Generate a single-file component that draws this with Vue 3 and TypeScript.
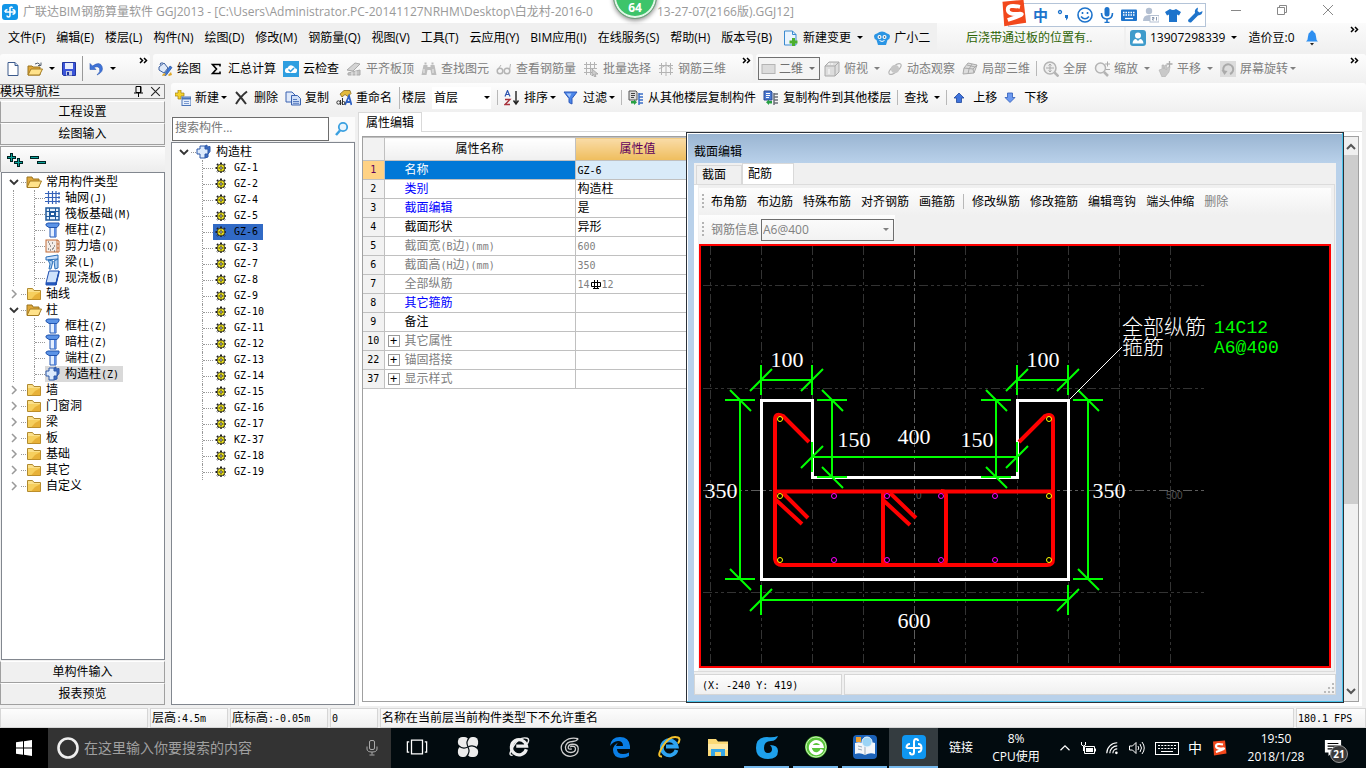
<script setup lang="ts">
import { ref } from 'vue'

interface Tool {
  icon?: string
  label?: string
  arrow?: 'near' | 'far'
  sep?: boolean
  dim?: boolean
}
interface TreeNode {
  label: string
  icon: string
  open?: boolean
  children?: { label: string; icon: string }[]
}
interface PropertyRow {
  no: number
  name: string
  value?: string
  tone: 'plain' | 'link' | 'dim'
  group?: boolean
}
interface Dim {
  x1: number
  y1: number
  x2: number
  y2: number
  text: string
  tx: number
  ty: number
}

const icons: Record<string, string> = {
  logo: '<rect width="16" height="16" rx="3" fill="#1296e8"/><path d="M8 3v8.500Q8 13 6.500 13T5 11.500M3 8h10M10.500 5.500Q13 6 13 8T10.500 10.300M5.500 5.500Q3 6 3 8M8 4q1.500-2 2.500 0" fill="none" stroke="#fff" stroke-width="1.500"/>',
  page: '<path d="M3 1.500h7l3 3v10H3z" fill="#fff" stroke="#3c5a8c"/><path d="M10 1.500v3h3" fill="#cfe0f5" stroke="#3c5a8c"/>',
  folderOpen: '<path d="M1 3h5l1 2h6v8H1z" fill="#e0a83a" stroke="#9a7420"/><path d="M4 7h11.500l-3 6.500H1z" fill="#ffe28a" stroke="#a57c22"/>',
  openFile: '<path d="M1 5h4l1 1h7v8H1z" fill="#e0a83a" stroke="#9a7420"/><path d="M4 8h11.500l-3 6H1z" fill="#ffe28a" stroke="#a57c22"/><path d="M8 3q3-2.500 5.500 1M14 1.500v3h-3" fill="none" stroke="#55606e"/>',
  folder: '<path d="M1.500 2.500h5l1.500 2h6.500v9h-13z" fill="#fbe08a" stroke="#b08a30"/><path d="M2 6h12v7H2z" fill="#f6cf5e"/><path d="M9 9l5.500-3v7.500H5z" fill="#dd9c20" opacity=".6"/>',
  save: '<path d="M1.500 1.500h13v13h-12l-1-1z" fill="#3b55d9" stroke="#2136a0"/><path d="M4 2h8v6H4z" fill="#e9eefc"/><path d="M5 10h6v4.500H5z" fill="#c7cfe6"/><path d="M6 11h2v3H6z" fill="#2136a0"/>',
  undo: '<path d="M2 2.500v6h6L6 6.500q4-2 5.500 1T9 14q7-3 5-8.500T4.500 5z" fill="#3f73d8" stroke="#2b59b4" stroke-width=".6"/>',
  paint: '<path d="M2 6l5-4 4 5-4 5-5-3z" fill="#dfe9f8" stroke="#3b5fa0"/><path d="M3 4q0-3 3-2" fill="none" stroke="#3b5fa0"/><path d="M7 14l6-9 2 1.500-6 8z" fill="#3f79d8" stroke="#234f9c" stroke-width=".7"/><path d="M5 15q1-4 4-2-1 2-4 2M11 14l3-3 1 3-3 1z" fill="#e0a82a"/>',
  sigma: '<path d="M12 5.500V3.500H4.500L8.500 8l-4 4.500H12v-2" fill="none" stroke="#000" stroke-width="1.600"/>',
  cloud: '<rect width="16" height="16" fill="#2e9ee0"/><path d="M4 12q-2.500-.5-2-3T4.500 7Q6 3.500 9 4.500T11.800 7.300Q14.500 7.500 14 10T12 12z" fill="#fff"/><path d="M5.500 8.500l2 2 3.500-3.500" fill="none" stroke="#2e9ee0" stroke-width="1.500"/>',
  align: '<path d="M1 9l8-7 5 1-7 7z" fill="#d4d4d4" stroke="#aaa"/><path d="M2 12l12-3v5H2z" fill="#c4c4c4" stroke="#aaa"/><path d="M6 11v4M10 10v5" stroke="#eee"/>',
  binoc: '<path d="M2.500 4h4v2h3V4h4l2 10h-5l-1-5h-3l-1 5h-5z" fill="#bdbdbd"/><path d="M3.500 1.500h2v2h-2zM10.500 1.500h2v2h-2z" fill="#bdbdbd"/><path d="M3 8v4M12 8v4" stroke="#eee"/>',
  glasses: '<circle cx="4" cy="10" r="2.800" fill="none" stroke="#b4b4b4" stroke-width="1.500"/><circle cx="11" cy="10" r="2.800" fill="none" stroke="#b4b4b4" stroke-width="1.500"/><path d="M1.500 9L5 4M13.500 9l1-6" stroke="#b4b4b4" fill="none"/>',
  gridPick: '<path d="M1 3.500h13M1 7.500h13M1 11.500h8M3.500 1v13M7.500 1v13M11.500 1v7" stroke="#b4b4b4" fill="none"/><path d="M9 8l6 5-3 .2 1 2.300-1.500.5-1-2.500L9 15z" fill="#ccc" stroke="#999" stroke-width=".7"/>',
  rebar3d: '<path d="M1 4.500h14M1 11.500h14M3.500 2v12M8 1v14M12.500 2v12M1 8l7-4 7 4" stroke="#b4b4b4" fill="none"/>',
  rectDim: '<rect x="1" y="3.500" width="13" height="9" fill="#dcdcdc" stroke="#b4b4b4"/>',
  cube: '<path d="M1 5l4-4h10v10l-4 4H1z" fill="#ddd" stroke="#aaa"/><path d="M1 5h10v10M11 5l4-4" stroke="#aaa" fill="none"/><path d="M5 2v2M8 2v2M5 8v5" stroke="#fff"/>',
  orbit: '<ellipse cx="8" cy="8" rx="7.500" ry="3" transform="rotate(-40 8 8)" fill="none" stroke="#b4b4b4"/><circle cx="8" cy="8" r="4" fill="#c6c6c6"/>',
  local3d: '<path d="M6 2l9 2-3 8-11 1 1-6z" fill="#ddd" stroke="#aaa"/><path d="M2 7l9 1 4-4M11 8l1 4M5 4l8 2M6 13l1-5 3-5" stroke="#aaa" fill="none"/>',
  full: '<circle cx="7" cy="7" r="6" fill="#eee" stroke="#b4b4b4" stroke-width="1.500"/><path d="M7 3v8M3 7h8M5.500 4.500L7 3l1.500 1.500M5.500 9.500L7 11l1.500-1.500" stroke="#aaa" fill="none"/><path d="M11.500 11.500l4 4" stroke="#b4b4b4" stroke-width="2.500"/>',
  zoom: '<circle cx="6.500" cy="7" r="5" fill="#f2f2f2" stroke="#b4b4b4" stroke-width="1.500"/><path d="M10 11l4 4" stroke="#b4b4b4" stroke-width="2.500"/><path d="M11 3h5M13.500 .5v5M12 8.500h4" stroke="#aaa"/>',
  pan: '<path d="M2 9l3-1V4h2v4l1-4h2l-1 5 2-3h2l-1 5-4 5H5z" fill="#c9c9c9" stroke="#b0b0b0" stroke-width=".6"/><path d="M12.500 0v6M9.500 3h6" stroke="#aaa" stroke-width="1.300"/>',
  rotate: '<rect x="0" y="0" width="16" height="16" fill="#dcdcdc"/><path d="M4 11a5 5 0 1 1 6 2" fill="none" stroke="#aaa" stroke-width="2"/><path d="M1.500 9l3 5 3-4z" fill="#aaa"/>',
  create: '<path d="M3 0h3v3h3v3H6v3H3V6H0V3h3z" fill="#f4d22c" stroke="#a07f10" stroke-width=".7"/><rect x="7" y="7" width="9" height="8.500" fill="#e6effc" stroke="#4a74b8"/><path d="M7 8.500h9" stroke="#4a74b8" stroke-width="2"/><path d="M9 11.500h5M9 13.500h5" stroke="#7b9ad0"/>',
  cross: '<path d="M2 2q5 5 10 12M13 1.500Q7 6 2 14" fill="none" stroke="#333" stroke-width="2"/>',
  copy: '<path d="M1 2h6l3 3v7H1z" fill="#dfe9fa" stroke="#3a62b0"/><path d="M6.500 5.500h6l3 3v6.500h-9z" fill="#cfdff8" stroke="#3a62b0"/><path d="M8 9.500h4M8 11.500h6M8 13.300h6" stroke="#3a62b0" stroke-width=".8"/>',
  rename: '<path d="M4 4l4-3.500h6l1 3-3 3-3-2-3 2.500z" fill="#e3bb3c" stroke="#7a5c10" stroke-width=".7"/><path d="M9 15l4-9 2.500 9M10.500 12h4" fill="none" stroke="#2f62c4" stroke-width="1.800"/><circle cx="2.500" cy="12.500" r="1.700" fill="none" stroke="#333"/><path d="M4.500 10v5M6.500 8v7" stroke="#333"/><circle cx="7.500" cy="13" r="1.500" fill="none" stroke="#333"/>',
  sort: '<path d="M1 6.500L3.500.5 6 6.500M2 4.500h3" fill="none" stroke="#2f55b0" stroke-width="1.200"/><path d="M1 9.500h5l-5 5h5" fill="none" stroke="#a8323c" stroke-width="1.300"/><path d="M12 1v12M9.500 10.500L12 14l2.500-3.500" fill="none" stroke="#222" stroke-width="1.400"/>',
  filter: '<path d="M1 2h13L9 8.500V14l-3-1.500v-4z" fill="#4b86ea" stroke="#2b56b8"/><path d="M3.500 3.500h5l-2 4z" fill="#a8c8fa"/>',
  floorCopy: '<path d="M1 1h7l1 1v8H1z" fill="#ddd" stroke="#555"/><path d="M3 3.500h4M3 5.500h4M3 7.500h3" stroke="#444"/><path d="M3 11h3v-1.500l3 2.700L6 15v-1.500H3z" fill="#27a043"/><path d="M11 3v12M11 4h4M11 7h4M11 10h4M11 13h4" stroke="#3b6fc8" stroke-width="1.500"/>',
  floorPaste: '<path d="M1 1h7l1 1v8H1z" fill="#4a78d2" stroke="#2a4a90"/><path d="M3 3.500h4M3 5.500h4M3 7.500h3" stroke="#fff"/><path d="M9 11H6V9.500l-3 2.700L6 15v-1.500h3z" fill="#27a043"/><path d="M11 3v12M11 4h4M11 7h4M11 10h4M11 13h4" stroke="#6a6f78" stroke-width="1.500"/>',
  up: '<path d="M6 3l5 5H8.500v4.500h-5V8H1z" fill="#3f73dc" stroke="#1f479c" stroke-width=".8"/>',
  down: '<path d="M6 12.500l5-5H8.500V3h-5v4.500H1z" fill="#6d9af0" stroke="#2f5cb8" stroke-width=".8"/>',
  changeDoc: '<path d="M1.500 1h8l3.500 3.500V15H1.500z" fill="#eaf4fe" stroke="#3a8ad0"/><path d="M9.500 1v3.500H13" fill="none" stroke="#3a8ad0"/><path d="M9 8h3v2.500h2.500v3H12V16H9v-2.500H6.500v-3H9z" fill="#4caf2e"/>',
  robot: '<path d="M3 3.500Q8-.5 13 3.500q3 .5 3 3T13.500 10L12 15H4l-1.500-5Q0 9 0 6.500t3-3" fill="#2b95e4"/><circle cx="5.500" cy="7" r="2" fill="#fff"/><circle cx="10.500" cy="7" r="2" fill="#fff"/><circle cx="5.500" cy="7" r=".8" fill="#135"/><circle cx="10.500" cy="7" r=".8" fill="#135"/><path d="M5.500 10.500q2.500 2 5 0" stroke="#fff" fill="none"/>',
  user: '<rect width="16" height="16" rx="3" fill="#3e9bcb"/><circle cx="8" cy="5.500" r="3" fill="#fff"/><path d="M2.500 13.500Q3 9 6 9l2 2 2-2q3 0 3.500 4.500z" fill="#fff"/>',
  bell: '<path d="M6 .5q1.500 0 1.500 1.300Q10 3 10 6.500q0 3.500 2 5H0q2-1.500 2-5Q2 3 4.500 1.800 4.500.5 6 .5" fill="#2e8ff0"/><path d="M4 13h4l-2 2.500z" fill="#222"/>',
  axis: '<path d="M0 3.500h13M0 7.500h13M0 11.500h13M3.500 1v13M7.500 1v13M11 1v13" stroke="#3562b8" stroke-width="1.200" fill="none"/><path d="M13 2.500h2v2h-2zM13 6.500h2v2h-2zM13 10.500h2v2h-2z" fill="#3562b8"/>',
  raft: '<rect x="1" y="2" width="13" height="12" fill="#e6f1fb" stroke="#1f5a9c" stroke-width="1.500"/><path d="M4.500 2v12M10.500 2v12M1 5.500h13M1 10.500h13" stroke="#1f5a9c" fill="none"/><rect x="5.500" y="6.500" width="4" height="3" fill="#fff" stroke="#1f5a9c"/>',
  column: '<path d="M1 2l2-1h11v2l-2 2.500H4L1 3.500z" fill="#5b93e6" stroke="#2356b0"/><path d="M5 5.500h6v9.500H5z" fill="#e4efff" stroke="#2356b0"/><path d="M9.800 6v9" stroke="#4b7fe0" stroke-width="1.500"/>',
  wall: '<rect x="1" y="2" width="11" height="12" fill="#f4ede8" stroke="#c26a34"/><path d="M12 2l2 1v11l-2 0M12 6h2M12 10h2" stroke="#c26a34" fill="none"/><path d="M3 4h1M7 5h1M5 8h1M9 8h1M3 11h1M7 11h1M9 13h1M4 6h1M8 10h1M5 12h1" stroke="#444"/>',
  beam: '<path d="M1 3l12-2v4L1 6z" fill="#cfe2fb" stroke="#2a6fb8"/><path d="M3 6l5 1-2 8H4l1-5zM9 7l4-2v9l-3 1z" fill="#a8cdf2" stroke="#2a6fb8"/>',
  slab: '<path d="M4 1h10l-3 12H1z" fill="#cfe2fb" stroke="#1f4fb0"/><path d="M1 13h10v2H1zM14 1v2l-3 12v-2z" fill="#2a62cc" stroke="#1f4fb0"/>',
  gz: '<path d="M9 2l2-1v2l3-.500v5L12 10v3l-3 1" fill="#3c6cc4" stroke="#2c59a8"/><path d="M4 2h5v3h3v5H9v4H4v-4H1V5h3z" fill="#dceafc" stroke="#2c59a8"/>',
  gear: '<path d="M8 2.500v11M2.500 8h11M4 4l8 8M12 4l-8 8" stroke="#222" stroke-width="2" stroke-dasharray="1.500 .700"/><circle cx="8" cy="8" r="3.800" fill="#f7ec1c" stroke="#222" stroke-width=".8"/><path d="M5 8h6M8 5v6" stroke="#8a8200"/><circle cx="8" cy="8" r="1.200" fill="#fff" stroke="#222" stroke-width=".8"/>',
  magnifier: '<circle cx="9" cy="6" r="4.200" fill="#eaf5fd" stroke="#3ba0e0" stroke-width="1.800"/><path d="M6 9.500L2 14" stroke="#3ba0e0" stroke-width="2.500"/>',
  more: '<path d="M1 4l2.500 2.500L1 9M5 4l2.500 2.500L5 9" fill="none" stroke="#000" stroke-width="1.500"/>',
  start: '<path d="M0 2.300l7-1v6.200H0zM8 1.200L16 0v7.500H8zM0 8.500h7v6.200l-7-1zM8 8.500h8V16l-8-1.200z" fill="#fff"/>',
  mic: '<rect x="5.500" y="1" width="5" height="9" rx="1.500" fill="none" stroke="#aaa"/><path d="M3 7v2.500Q3 12.500 8 12.500t5-3V7M8 12.500V15M5.500 15.500h5" fill="none" stroke="#aaa"/>',
  tkView: '<path d="M6 4.500h12v15H6zM3.500 6.500h-2v11h2M20.500 6.500h2v11h-2" fill="none" stroke="#fff" stroke-width="1.400"/>',
  tkFan: '<g fill="#ececec"><rect x="1" y="1" width="12" height="11" rx="5"/><rect x="12" y="1" width="11" height="12" rx="5"/><rect x="11" y="12" width="12" height="11" rx="5"/><rect x="1" y="11" width="11" height="12" rx="5"/><circle cx="12" cy="12" r="4"/></g><path d="M12 12Q9 6 14 1M12 12q6-3 11 2M12 12q3 6-2 11M12 12q-6 3-11-2" fill="none" stroke="#071015" stroke-width="1.300"/>',
  tkIe: '<path d="M20 14.500a8.300 8.300 0 1 1 .2-3.500H9" fill="none" stroke="#efefef" stroke-width="3.600"/><path d="M5 21Q-1 22 6 11T21 2.500q3 1 0 6" fill="none" stroke="#efefef" stroke-width="1.600"/>',
  tkSwirl: '<path d="M21 3q-2 3-6 3-7 0-8 6 0 6 6 6 5 0 5-4 0-3-4-3l-2 1M21 3Q12 1 6 6T4 18q4 5 10 4 7-1 7-8 0-5-6-5-5 0-5 4 1 2 4 1" fill="none" stroke="#cfcfcf" stroke-width="1.400"/>',
  tkEdge: '<path d="M2 11Q3 2 12 2t10 9v3H9q0 5 6 5 3 0 6-1.500V21q-3 2-8 2-8-1-8-8 0-5 6-8-2 1-3 4h7q0-5-5-5-5 .500-8 5" fill="#0a7ee6"/>',
  tkIe2: '<path d="M19.500 15a7.500 7.500 0 1 1 .2-3.500H9" fill="none" stroke="#2ea3f0" stroke-width="3.800"/><path d="M5 21.500Q-1 22 6 11T21 2.500q3 1 0 6" fill="none" stroke="#f5c22c" stroke-width="2"/>',
  tkFolder: '<path d="M2 4h8l2 2.500h10V21H2z" fill="#fbd976"/><path d="M2 9h20v6H2z" fill="#ffe9a6"/><path d="M5 21v-7h14v7h-4v-4H9v4z" fill="#36a7e8"/>',
  tkG: '<path d="M23 1q-2 5-7 5-7 0-7 7 0 5 4 5 4 0 4-4 0-2-2-4 8 0 8 6 0 8-10 8Q1 24 1 13 1 2 12 2q6 1 11-1" fill="#1ea1ec"/>',
  tk360: '<circle cx="12" cy="12" r="11" fill="#5ac43a"/><circle cx="12" cy="12" r="10" fill="none" stroke="#c9f0b8"/><path d="M18 14.500a6 6 0 1 1 .2-3H8" fill="none" stroke="#fff" stroke-width="3"/>',
  tkBook: '<rect width="24" height="24" rx="4" fill="#1c62b8"/><path d="M2 8q5-2 10 1 5-3 10-1v11q-5-2-10 1-5-3-10-1z" fill="#f4f6fa"/><path d="M12 9v11M5 11l4 1M5 14l4 1" stroke="#9ab"/><circle cx="14" cy="7" r="5" fill="#9cd4f6" stroke="#e8f4fc"/><path d="M3 2h5v5H3z" fill="#f0a030"/>',
  tkGld: '<rect width="24" height="24" rx="4" fill="#0f96f0"/><path d="M12 6v11q0 2.500-2 2.500T8 17M4.500 13h15M16 9q3.500 0 3.500 4T16 17M8 9q-3.500 0-3.500 4M12 7q0-3 2-3t2 2" fill="none" stroke="#fff" stroke-width="2"/>',
  chevUp: '<path d="M2 11l6-6 6 6" fill="none" stroke="#fff" stroke-width="1.600"/>',
  battery: '<path d="M4.500 6.500h10v7h-10zM15.500 8.500v3" fill="none" stroke="#fff"/><path d="M6 8h7v4H6z" fill="#fff"/><path d="M1.500 2v3q2 2 4 0V2M3.500 6v5" fill="none" stroke="#fff"/>',
  wifi: '<path d="M2 14A12 12 0 0 1 14 2M5.500 14A8.500 8.500 0 0 1 14 5.500M9 14a5 5 0 0 1 5-5" fill="none" stroke="#fff" stroke-width="1.300"/><circle cx="13" cy="13.500" r="1.500" fill="#fff"/>',
  speaker: '<path d="M1 6h3l3.500-3.500v11L4 10H1z" fill="none" stroke="#fff"/><path d="M9.500 6q1.500 2 0 4M11.500 4q3 4 0 8M13.500 2q4.500 6 0 12" fill="none" stroke="#fff"/>',
  keyboard: '<rect x=".5" y="2.500" width="23" height="12" fill="none" stroke="#fff"/><path d="M3 5.500h18M3 8.500h18" stroke="#fff" stroke-dasharray="2 1.200"/><path d="M6 11.500h12" stroke="#fff"/>',
  sogou: '<path d="M2 1.500L14 .5l1.500 13-12.500 2z" fill="#f2481c"/><path d="M12 4.500Q5 3 5 6t6 2.500-6 3.500" fill="none" stroke="#fff" stroke-width="2.200"/>',
  note: '<path d="M1 1h18v14H9l-4 4v-4H1z" fill="#fff"/><path d="M4 5h12M4 8h12M4 11h8" stroke="#000" stroke-width="1.300"/>',
  smile: '<circle cx="8" cy="8" r="7" fill="none" stroke="#1e74cc" stroke-width="1.600"/><path d="M5.500 5v2M10.500 5v2M4 9.500q4 4.500 8 0" fill="none" stroke="#1e74cc" stroke-width="1.600"/>',
  imeMic: '<rect x="5.500" y="0" width="5" height="9.500" rx="2.500" fill="#1e74cc"/><path d="M2.500 6q0 6 5.500 6t5.500-6M8 12v4M5.500 15.500h5" fill="none" stroke="#1e74cc" stroke-width="1.600"/>',
  imeKb: '<rect y="2.500" width="16" height="11.500" rx="1" fill="#1e74cc"/><path d="M2 5.500h12M2 8h12" stroke="#fff" stroke-width="1.300" stroke-dasharray="1.500 1"/><path d="M4 11.500h8" stroke="#fff" stroke-width="1.300"/>',
  imeUser: '<circle cx="6" cy="4" r="3.200" fill="#b4c0d2"/><path d="M0 14q0-6 6-6t6 6z" fill="#b4c0d2"/><rect x="7" y="8.500" width="9" height="6.500" fill="#fff" stroke="#b4c0d2"/><path d="M9 10.500h2v1.200H9.500V13H11M13.500 10v3.500" fill="none" stroke="#8c9bb2"/>',
  shirt: '<path d="M5 2q3 2 6 0l5 3-2 3.500-2-1V15H4V7.500l-2 1L0 5z" fill="#1e74cc"/>',
  wrench: '<path d="M1 13l7-7Q7 2 11 .5L10.500 4l2 1.500 3-1.500Q15.500 8 11 8.500L4 15.500Q1 16 1 13" fill="#1e74cc"/>',
  pin: '<path d="M4 1.500h5v6H4zM2 8h9M6.500 8v4" fill="none" stroke="#000"/><path d="M8.500 2v5" stroke="#000"/>',
  closeX: '<path d="M2 2l8 8M10 2l-8 8" fill="none" stroke="#222"/>',
  expandAll: '<path d="M4.500 0v9M0 4.500h9M11.500 5v9M7 9.500h9" stroke="#022" stroke-width="3"/><path d="M4.500 1v7M1 4.500h7M11.500 6v7M8 9.500h7" stroke="#0aa39a" stroke-width="1"/>',
  collapseAll: '<path d="M0 4.500h9M7 9.500h9" stroke="#022" stroke-width="3"/><path d="M1 4.500h7M8 9.500h7" stroke="#0aa39a"/>',
}

const titleStart = '广联达BIM钢筋算量软件 GGJ2013 - [C:\\Users\\Administrator.PC-20141127NRHM\\Desktop\\白龙村-2016-0'
const titleEnd = '13-27-07(2166版).GGJ12]'

const menus = ['文件(F)', '编辑(E)', '楼层(L)', '构件(N)', '绘图(D)', '修改(M)', '钢筋量(Q)', '视图(V)', '工具(T)', '云应用(Y)', 'BIM应用(I)', '在线服务(S)', '帮助(H)', '版本号(B)']

const drawTools: Tool[] = [
  { icon: 'paint', label: '绘图' },
  { icon: 'sigma', label: '汇总计算' },
  { icon: 'cloud', label: '云检查' },
  { icon: 'align', label: '平齐板顶', dim: true },
  { icon: 'binoc', label: '查找图元', dim: true },
  { icon: 'glasses', label: '查看钢筋量', dim: true },
  { icon: 'gridPick', label: '批量选择', dim: true },
  { icon: 'rebar3d', label: '钢筋三维', dim: true },
]
const viewTools: Tool[] = [
  { icon: 'cube', label: '俯视', dim: true, arrow: 'far' },
  { icon: 'orbit', label: '动态观察', dim: true },
  { icon: 'local3d', label: '局部三维', dim: true },
  { sep: true },
  { icon: 'full', label: '全屏', dim: true },
  { icon: 'zoom', label: '缩放', dim: true, arrow: 'far' },
  { icon: 'pan', label: '平移', dim: true, arrow: 'far' },
  { icon: 'rotate', label: '屏幕旋转', dim: true, arrow: 'near' },
]
const editTools: Tool[] = [
  { icon: 'create', label: '新建', arrow: 'near' },
  { icon: 'cross', label: '删除' },
  { icon: 'copy', label: '复制' },
  { icon: 'rename', label: '重命名' },
]
const listTools: Tool[] = [
  { sep: true },
  { icon: 'sort', label: '排序', arrow: 'near' },
  { icon: 'filter', label: '过滤', arrow: 'near' },
  { sep: true },
  { icon: 'floorCopy', label: '从其他楼层复制构件' },
  { icon: 'floorPaste', label: '复制构件到其他楼层' },
  { sep: true },
  { label: '查找', arrow: 'far' },
  { sep: true },
  { icon: 'up', label: '上移' },
  { icon: 'down', label: '下移' },
]

const tree: TreeNode[] = [
  {
    label: '常用构件类型',
    icon: 'folderOpen',
    open: true,
    children: [
      { label: '轴网(J)', icon: 'axis' },
      { label: '筏板基础(M)', icon: 'raft' },
      { label: '框柱(Z)', icon: 'column' },
      { label: '剪力墙(Q)', icon: 'wall' },
      { label: '梁(L)', icon: 'beam' },
      { label: '现浇板(B)', icon: 'slab' },
    ],
  },
  { label: '轴线', icon: 'folder' },
  {
    label: '柱',
    icon: 'folderOpen',
    open: true,
    children: [
      { label: '框柱(Z)', icon: 'column' },
      { label: '暗柱(Z)', icon: 'column' },
      { label: '端柱(Z)', icon: 'column' },
      { label: '构造柱(Z)', icon: 'gz' },
    ],
  },
  ...['墙', '门窗洞', '梁', '板', '基础', '其它', '自定义'].map((label) => ({ label, icon: 'folder' })),
]

const members = ['GZ-1', 'GZ-2', 'GZ-4', 'GZ-5', 'GZ-6', 'GZ-3', 'GZ-7', 'GZ-8', 'GZ-9', 'GZ-10', 'GZ-11', 'GZ-12', 'GZ-13', 'GZ-14', 'GZ-15', 'GZ-16', 'GZ-17', 'KZ-37', 'GZ-18', 'GZ-19']
const selected = ref('GZ-6')

const properties: PropertyRow[] = [
  { no: 1, name: '名称', value: 'GZ-6', tone: 'plain' },
  { no: 2, name: '类别', value: '构造柱', tone: 'link' },
  { no: 3, name: '截面编辑', value: '是', tone: 'link' },
  { no: 4, name: '截面形状', value: '异形', tone: 'plain' },
  { no: 5, name: '截面宽(B边)(mm)', value: '600', tone: 'dim' },
  { no: 6, name: '截面高(H边)(mm)', value: '350', tone: 'dim' },
  { no: 7, name: '全部纵筋', value: '14⌀12', tone: 'dim' },
  { no: 8, name: '其它箍筋', tone: 'link' },
  { no: 9, name: '备注', tone: 'plain' },
  { no: 10, name: '其它属性', tone: 'dim', group: true },
  { no: 22, name: '锚固搭接', tone: 'dim', group: true },
  { no: 37, name: '显示样式', tone: 'dim', group: true },
]

const sectionTools = ['布角筋', '布边筋', '特殊布筋', '对齐钢筋', '画箍筋', '|', '修改纵筋', '修改箍筋', '编辑弯钩', '端头伸缩', '删除']

const gridX = [710, 761, 812, 863, 965, 1017, 1068, 1119, 1170]
const gridY = [285, 388, 592]
const dims: Dim[] = [
  { x1: 761, y1: 380, x2: 812, y2: 380, text: '100', tx: 787, ty: 367 },
  { x1: 1017, y1: 380, x2: 1068, y2: 380, text: '100', tx: 1043, ty: 367 },
  { x1: 812, y1: 457, x2: 1017, y2: 457, text: '400', tx: 914, ty: 444 },
  { x1: 761, y1: 600, x2: 1068, y2: 600, text: '600', tx: 914, ty: 628 },
  { x1: 740, y1: 400, x2: 740, y2: 579, text: '350', tx: 721, ty: 498 },
  { x1: 832, y1: 400, x2: 832, y2: 477, text: '150', tx: 854, ty: 447 },
  { x1: 996, y1: 400, x2: 996, y2: 477, text: '150', tx: 977, ty: 447 },
  { x1: 1088, y1: 400, x2: 1088, y2: 579, text: '350', tx: 1109, ty: 498 },
]
function dimPath(d: Dim): string {
  const ends = [[d.x1, d.y1], [d.x2, d.y2]]
  const ticks = ends.map(([x, y]) =>
    d.y1 === d.y2
      ? `M${x} ${y - 15}v30M${x - 11} ${y + 11}l22 -22`
      : `M${x - 15} ${y}h30M${x - 10} ${y - 10}l21 21`,
  )
  return `M${d.x1} ${d.y1}L${d.x2} ${d.y2}${ticks.join('')}`
}
const cornerBars = [780, 1049].flatMap((x) => [419, 496, 560].map((y) => ({ x, y })))
const sideBars = [834, 887, 941, 995].flatMap((x) => [496, 560].map((y) => ({ x, y })))

const pinned = [
  { icon: 'tkView', name: '任务视图' },
  { icon: 'tkFan', name: '风车' },
  { icon: 'tkIe', name: '浏览器' },
  { icon: 'tkSwirl', name: '漩涡' },
]
const running = [
  { icon: 'tkEdge', name: 'Edge', on: false },
  { icon: 'tkIe2', name: 'IE', on: false },
  { icon: 'tkFolder', name: '文件夹', on: false },
  { icon: 'tkG', name: 'G', on: true },
  { icon: 'tk360', name: '绿色浏览器', on: true },
  { icon: 'tkBook', name: '图册', on: true },
  { icon: 'tkGld', name: '广联达', on: true },
]

/** Splits a label so that Latin runs can take the half-width face. */
function runs(text: string): { t: string; half: boolean }[] {
  return (text.match(/[\x20-\x7e]+|[^\x20-\x7e]+/g) ?? []).map((t) => ({ t, half: /^[\x20-\x7e]/.test(t) }))
}
</script>

<template>
  <div class="screen">
    <header class="titlebar">
      <svg class="i16" viewBox="0 0 16 16" v-html="icons.logo" />
      <span class="title">{{ titleStart }}</span>
      <div class="ballslot"><div class="ball">64</div></div>
      <span>{{ titleEnd }}</span>
      <div class="winbtns">
        <button aria-label="最小化"><svg viewBox="0 0 12 12"><path d="M1 6.500h10" stroke="#888" /></svg></button>
        <button aria-label="还原"><svg viewBox="0 0 12 12"><path d="M1.500 3.500h7v7h-7zM3.500 3V1.500h7v7H9" fill="none" stroke="#888" /></svg></button>
        <button aria-label="关闭"><svg viewBox="0 0 12 12"><path d="M1 1l10 10M11 1L1 11" stroke="#888" /></svg></button>
      </div>
      <div class="ime">
        <svg class="imelogo" viewBox="0 0 16 16" v-html="icons.sogou" />
        <span class="imezh">中</span>
        <svg class="i16" viewBox="0 0 16 16"><circle cx="5" cy="5" r="1.500" fill="none" stroke="#1e74cc" stroke-width="1.300" /><path d="M10 8h3v3l-2 2.500v-2.500h-1z" fill="#1e74cc" /></svg>
        <svg v-for="n in ['smile', 'imeMic', 'imeKb', 'imeUser', 'shirt', 'wrench']" :key="n" class="i16" viewBox="0 0 16 16" v-html="icons[n]" />
      </div>
    </header>

    <nav class="menubar">
      <div class="menus">
        <button v-for="m in menus" :key="m">{{ m }}</button>
        <button class="tool"><svg class="i16" viewBox="0 0 16 16" v-html="icons.changeDoc" /><span>新建变更</span><i class="arrow far" /></button>
        <button class="tool"><svg class="i16" viewBox="0 0 16 16" v-html="icons.robot" /><span>广小二</span></button>
      </div>
      <a class="tip" href="#">后浇带通过板的位置有..</a>
      <div class="account">
        <button class="tool"><svg class="i16" viewBox="0 0 16 16" v-html="icons.user" /><span>13907298339</span><i class="arrow far" /></button>
        <button>造价豆:0</button>
        <button aria-label="消息"><svg class="bell" viewBox="0 0 12 16" v-html="icons.bell" /></button>
        <svg class="more" viewBox="0 0 9 13" v-html="icons.more" />
      </div>
    </nav>

    <div class="toolrow">
      <div class="strip files">
        <button aria-label="新建"><svg class="i16" viewBox="0 0 16 16" v-html="icons.page" /></button>
        <button class="tool" aria-label="打开"><svg class="i16" viewBox="0 0 16 16" v-html="icons.openFile" /><i class="arrow far" /></button>
        <button aria-label="保存"><svg class="i16" viewBox="0 0 16 16" v-html="icons.save" /></button>
        <i class="sep tall" />
        <button class="tool" aria-label="撤销"><svg class="i16" viewBox="0 0 16 16" v-html="icons.undo" /><i class="arrow far" /></button>
        <svg class="more" viewBox="0 0 9 13" v-html="icons.more" />
      </div>
      <div class="strip draw">
        <button v-for="t in drawTools" :key="t.label" class="tool" :class="{ dim: t.dim }">
          <svg class="i16" viewBox="0 0 16 16" v-html="icons[t.icon!]" /><span>{{ t.label }}</span>
        </button>
        <svg class="more" viewBox="0 0 9 13" v-html="icons.more" />
      </div>
      <div class="strip view">
        <label class="combo mode">
          <svg class="i16" viewBox="0 0 16 16" v-html="icons.rectDim" />
          <select aria-label="视图模式"><option>二维</option></select><i class="arrow" />
        </label>
        <template v-for="(t, n) in viewTools" :key="n">
          <i v-if="t.sep" class="sep" />
          <button v-else class="tool dim">
            <svg class="i16" viewBox="0 0 16 16" v-html="icons[t.icon!]" /><span>{{ t.label }}</span><i v-if="t.arrow" class="arrow" :class="t.arrow" />
          </button>
        </template>
        <svg class="more" viewBox="0 0 9 13" v-html="icons.more" />
      </div>
    </div>

    <main class="work">
      <aside class="modules">
        <div class="dockhead">
          <span>模块导航栏</span>
          <button aria-label="固定"><svg viewBox="0 0 13 13" v-html="icons.pin" /></button>
          <button aria-label="关闭"><svg viewBox="0 0 12 12" v-html="icons.closeX" /></button>
        </div>
        <button class="dockbtn">工程设置</button>
        <button class="dockbtn">绘图输入</button>
        <div class="treetools">
          <button aria-label="全部展开"><svg viewBox="0 0 16 14" v-html="icons.expandAll" /></button>
          <button aria-label="全部折叠"><svg viewBox="0 0 16 14" v-html="icons.collapseAll" /></button>
        </div>
        <ul class="tree">
          <li v-for="node in tree" :key="node.label">
            <button class="node">
              <svg class="chev" viewBox="0 0 10 10"><path v-if="node.open" d="M1 3l4 4 4-4" fill="none" stroke="#333" stroke-width="1.800" /><path v-else d="M3 1l4 4-4 4" fill="none" stroke="#999" stroke-width="1.500" /></svg>
              <i class="stub" /><svg class="i16" viewBox="0 0 16 16" v-html="icons[node.icon]" />
              <span class="lbl">{{ node.label }}</span>
            </button>
            <ul v-if="node.children" class="kids">
              <li v-for="kid in node.children" :key="kid.label">
                <i class="branch" />
                <button class="leaf" :class="{ on: kid.label === '构造柱(Z)' }">
                  <svg class="i16" viewBox="0 0 16 16" v-html="icons[kid.icon]" />
                  <span><span v-for="(r, n) in runs(kid.label)" :key="n" :class="{ half: r.half }">{{ r.t }}</span></span>
                </button>
              </li>
            </ul>
          </li>
        </ul>
        <button class="dockbtn">单构件输入</button>
        <button class="dockbtn">报表预览</button>
      </aside>

      <section class="stage">
        <div class="strip edit">
          <button v-for="t in editTools" :key="t.label" class="tool">
            <svg class="i16" viewBox="0 0 16 16" v-html="icons[t.icon!]" /><span>{{ t.label }}</span><i v-if="t.arrow" class="arrow" :class="t.arrow" />
          </button>
          <label class="floor">楼层<span class="combo flat"><select><option>首层</option></select><i class="arrow" /></span></label>
          <template v-for="(t, n) in listTools" :key="n">
            <i v-if="t.sep" class="sep" />
            <button v-else class="tool">
              <svg v-if="t.icon" class="i16" viewBox="0 0 16 16" v-html="icons[t.icon]" /><span>{{ t.label }}</span><i v-if="t.arrow" class="arrow" :class="t.arrow" />
            </button>
          </template>
        </div>

        <div class="panes">
          <section class="members">
            <div class="search">
              <input type="text" aria-label="搜索构件" placeholder="搜索构件..." />
              <button aria-label="搜索"><svg class="i16" viewBox="0 0 16 16" v-html="icons.magnifier" /></button>
            </div>
            <div class="memberlist">
              <button class="root">
                <svg class="chev" viewBox="0 0 10 10"><path d="M1 3l4 4 4-4" fill="none" stroke="#333" stroke-width="1.800" /></svg>
                <i class="stub" /><svg class="i16" viewBox="0 0 16 16" v-html="icons.gz" /><span>构造柱</span>
              </button>
              <ul>
                <li v-for="m in members" :key="m">
                  <i class="branch" />
                  <button class="member" :class="{ on: m === selected }" @click="selected = m">
                    <svg class="i16" viewBox="0 0 16 16" v-html="icons.gear" /><span class="half">{{ m }}</span>
                  </button>
                </li>
              </ul>
            </div>
          </section>

          <section class="props">
            <div class="tabs"><button class="tab">属性编辑</button></div>
            <div class="sheet">
              <table>
                <thead><tr><th class="no"></th><th class="name">属性名称</th><th class="val">属性值</th></tr></thead>
                <tbody>
                  <tr v-for="p in properties" :key="p.no" :class="[p.tone, { cur: p.no === 1 }]">
                    <th class="no half">{{ p.no }}</th>
                    <td class="name" :class="{ group: p.group }">
                      <button v-if="p.group" class="plus" :aria-label="'展开' + p.name">+</button><span v-for="(r, n) in runs(p.name)" :key="n" :class="{ half: r.half }">{{ r.t }}</span>
                    </td>
                    <td class="val">
                      <template v-for="(r, n) in runs(p.value ?? '')" :key="n">
                        <svg v-if="r.t === '⌀'" class="bar" viewBox="0 0 12 12"><path d="M4.500 2v8M7.500 2v8M1.500 4.500h9v4h-9zM3 10.500h6" fill="none" stroke="#000" /></svg>
                        <span v-else :class="{ half: r.half }">{{ r.t }}</span>
                      </template>
                    </td>
                  </tr>
                </tbody>
              </table>
              <div class="vscroll">
                <svg viewBox="0 0 10 10"><path d="M1 7l4-4 4 4" fill="none" stroke="#555" stroke-width="2" /></svg>
                <i class="thumb" />
                <svg viewBox="0 0 10 10"><path d="M1 3l4 4 4-4" fill="none" stroke="#555" stroke-width="2" /></svg>
              </div>
            </div>

            <div class="dialog" role="dialog" aria-label="截面编辑窗口">
              <h2>截面编辑</h2>
              <div class="dbody">
                <div class="dtabs"><button>截面</button><button class="on">配筋</button></div>
                <div class="dpage">
                  <div class="dbar">
                    <i class="grip" />
                    <template v-for="s in sectionTools" :key="s">
                      <i v-if="s === '|'" class="sep" />
                      <button v-else :class="{ dim: s === '删除' }">{{ s }}</button>
                    </template>
                  </div>
                  <div class="dbar info">
                    <i class="grip" />
                    <label for="barInfo">钢筋信息</label>
                    <span class="combo bars"><select id="barInfo"><option>A6@400</option></select><i class="arrow" /></span>
                  </div>
                  <svg class="canvas" viewBox="701 246 628 420" preserveAspectRatio="xMidYMid meet">
                    <g fill="none" stroke="#333" stroke-dasharray="9 3 3 3 3 3" shape-rendering="crispEdges">
                      <path v-for="x in gridX" :key="'x' + x" :d="`M${x}.500 246V666`" />
                      <path v-for="y in gridY" :key="'y' + y" :d="`M703 ${y}.500H1204`" />
                      <path d="M914.500 246V666M703 490.500H1204" stroke="#5c5c5c" />
                    </g>
                    <g class="axis"><text x="916" y="499">0</text><text x="1166" y="499">500</text></g>
                    <path d="M761.500 400.500H812.500V477.500H1017.500V400.500H1068.500V579.500H761.500Z" fill="none" stroke="#fff" stroke-width="3" />
                    <g fill="none" stroke="#f00" stroke-width="4">
                      <path d="M809 442L783 416Q775 412 775 420V559Q776 565 782 565H1047Q1053 565 1053 559V420Q1053 413 1045 416L1019 442" />
                      <path d="M775 491.500H1053M783 493L808 518M776 500L802 524" />
                      <path d="M883 492V562Q884 565 888 565H941Q946 565 946 560V495Q946 491 941 491M890 493L916 518M883 500L910 525" />
                    </g>
                    <g fill="none" stroke="#ff0"><circle v-for="(b, n) in cornerBars" :key="n" :cx="b.x" :cy="b.y" r="2.500" /></g>
                    <g fill="none" stroke="#f0f"><circle v-for="(b, n) in sideBars" :key="n" :cx="b.x" :cy="b.y" r="2.500" /></g>
                    <g v-for="(d, n) in dims" :key="n">
                      <path :d="dimPath(d)" fill="none" stroke="#0f0" stroke-width="2" />
                      <text class="dim-text" :x="d.tx" :y="d.ty">{{ d.text }}</text>
                    </g>
                    <path d="M1122 347L1069 400" stroke="#fff" />
                    <g class="note"><text x="1122" y="334">全部纵筋</text><text x="1122" y="354">箍筋</text></g>
                    <g class="spec"><text x="1214" y="333">14C12</text><text x="1214" y="353">A6@400</text></g>
                  </svg>
                </div>
                <div class="dstatus"><span class="half">(X: -240 Y: 419)</span><span class="fill"><svg viewBox="0 0 12 12"><path d="M9 1h2v2H9zM5 5h2v2H5zM9 5h2v2H9zM1 9h2v2H1zM5 9h2v2H5zM9 9h2v2H9z" fill="#bbb" /></svg></span></div>
              </div>
            </div>
          </section>
        </div>
      </section>
    </main>

    <footer class="status">
      <span class="s1"></span>
      <span class="s2">层高<b class="half">:4.5m</b></span>
      <span class="s3">底标高<b class="half">:-0.05m</b></span>
      <span class="s4"><b class="half">0</b></span>
      <span class="s5">名称在当前层当前构件类型下不允许重名</span>
      <span class="s6"><b class="half">180.1 FPS</b></span>
    </footer>

    <footer class="taskbar">
      <button class="start" aria-label="开始"><svg viewBox="0 0 16 16" v-html="icons.start" /></button>
      <label class="cortana">
        <svg viewBox="0 0 24 24"><circle cx="12" cy="12" r="9.500" fill="none" stroke="#eee" stroke-width="2.600" /></svg>
        <input type="text" aria-label="搜索" placeholder="在这里输入你要搜索的内容" />
        <svg class="mic" viewBox="0 0 16 17" v-html="icons.mic" />
      </label>
      <button v-for="p in pinned" :key="p.icon" class="pin" :aria-label="p.name"><svg viewBox="0 0 24 24" v-html="icons[p.icon]" /></button>
      <button v-for="p in running" :key="p.icon" class="app" :class="{ on: p.on, active: p.icon === 'tkGld' }" :aria-label="p.name"><svg viewBox="0 0 24 24" v-html="icons[p.icon]" /></button>
      <span class="links">链接</span>
      <span class="cpu">8%<br />CPU使用</span>
      <div class="tray">
        <svg class="w12" viewBox="0 0 16 16" v-html="icons.chevUp" />
        <svg class="w16" viewBox="0 0 16 16" v-html="icons.battery" />
        <svg class="w14" viewBox="0 0 16 16" v-html="icons.wifi" />
        <svg class="w18" viewBox="0 0 17 16" v-html="icons.speaker" />
        <svg class="w24" viewBox="0 0 24 16" v-html="icons.keyboard" />
        <span class="lang">中</span>
        <svg class="w16" viewBox="0 0 16 16" v-html="icons.sogou" />
      </div>
      <span class="clock">19:50<br />2018/1/28</span>
      <button class="notice" aria-label="通知"><svg viewBox="0 0 20 20" v-html="icons.note" /><b>21</b></button>
    </footer>
  </div>
</template>

<style>
body {
  margin: 0;
  background: #f0f0f0;
}
</style>

<style scoped>
.screen {
  display: flex;
  flex-direction: column;
  min-height: 100vh;
  overflow: hidden;
  background: #f0f0f0;
  color: #000;
  font: 12px/16px 'Open Sans', 'Noto Sans CJK SC', sans-serif;
  white-space: nowrap;
}
.screen * {
  box-sizing: border-box;
}
button,
select,
input {
  margin: 0;
  padding: 0;
  border: 0;
  background: none;
  color: inherit;
  font: inherit;
  border-radius: 0;
}
select {
  appearance: none;
  outline: 0;
}
svg {
  display: block;
  flex: none;
}
ul {
  list-style: none;
  margin: 0;
  padding: 0;
}
a {
  text-decoration: none;
}
.half {
  font: 10px/16px 'DejaVu Sans Mono', monospace;
}
.i16 {
  width: 16px;
  height: 16px;
}
.arrow {
  flex: none;
  width: 0;
  height: 0;
  border: 3px solid transparent;
  border-top-color: currentColor;
  border-bottom-width: 0;
}
.arrow.near {
  margin-left: -2px;
}
.arrow.far {
  margin-left: 2px;
}
.tool {
  display: flex;
  align-items: center;
  gap: 4px;
}
.dim {
  color: #808080;
}
.sep {
  flex: none;
  width: 1px;
  height: 15px;
  margin: 0 -1px;
  background: #b8b8b8;
}
.sep.tall {
  height: 25px;
  background: #999;
}
.more {
  width: 9px;
  height: 13px;
  margin-left: auto;
  align-self: flex-start;
}

.titlebar {
  position: relative;
  display: flex;
  align-items: center;
  height: 23px;
  padding: 0 20px 0 2px;
  background: #fff;
  color: #999;
}
.title {
  width: 590px;
  margin-left: 5px;
}
.winbtns {
  display: flex;
  gap: 34px;
  margin-left: auto;
  align-self: flex-start;
  padding: 4px 12px 0 0;
}
.winbtns svg {
  width: 12px;
  height: 12px;
}
.ballslot {
  position: relative;
  width: 44px;
  height: 23px;
}
.ball {
  position: absolute;
  z-index: 5;
  left: 0;
  top: -25px;
  width: 44px;
  height: 44px;
  padding-top: 25px;
  border: 1px solid #7a9a80;
  border-radius: 50%;
  background: #3dc46a;
  box-shadow: inset 0 0 0 2px #e4f6e9, 0 2px 4px #999;
  color: #fff;
  font-weight: 700;
  line-height: 14px;
  text-align: center;
}
.ime {
  position: absolute;
  z-index: 5;
  left: 1008px;
  top: 3px;
  display: flex;
  align-items: center;
  gap: 6px;
  width: 198px;
  height: 24px;
  padding-left: 24px;
  border: 1px solid #b4c4d8;
  background: #fff;
}
.imelogo {
  position: absolute;
  left: -11px;
  top: -5px;
  width: 30px;
  height: 28px;
}
.imezh {
  width: 16px;
  color: #1e74cc;
  font-size: 15px;
  font-weight: 700;
}

.menubar {
  display: flex;
  gap: 2px;
  height: 29px;
}
.menus {
  display: flex;
  align-items: center;
  gap: 11px;
  width: 935px;
  padding-left: 8px;
  flex: none;
}
.tip {
  display: flex;
  align-items: center;
  width: 187px;
  padding-left: 29px;
  background: linear-gradient(#fbfbfb, #f0f0f0);
  color: #2e6404;
}
.account {
  flex: 1;
  display: flex;
  align-items: center;
  gap: 11px;
  padding: 0 7px 0 4px;
  background: linear-gradient(#fbfbfb, #f0f0f0);
}
.bell {
  width: 12px;
  height: 16px;
}

.toolrow {
  display: flex;
  gap: 3px;
  height: 31px;
  padding: 2px 0 0;
}
.strip {
  display: flex;
  align-items: center;
  gap: 7px;
  background: linear-gradient(#fdfdfd, #f0f0f0);
  border-radius: 3px;
}
.files {
  width: 150px;
  padding: 0 2px 0 5px;
  gap: 6px;
}
.draw {
  width: 600px;
  padding: 0 2px 0 4px;
}
.view {
  flex: 1;
  padding: 0 7px 0 2px;
}
.combo {
  position: relative;
  display: flex;
  align-items: center;
}
.combo .arrow {
  position: absolute;
  right: 4px;
  pointer-events: none;
}
.combo select {
  width: 100%;
}
.mode {
  width: 62px;
  height: 23px;
  padding-left: 2px;
  gap: 2px;
  margin-right: -3px;
  border: 1px solid #707070;
  color: #707070;
  background: #f4f4f4;
}

.work {
  display: flex;
  flex: 1;
  gap: 5px;
}
.modules {
  display: flex;
  flex-direction: column;
  width: 166px;
  flex: none;
  padding: 1px 1px 3px 0;
}
.dockhead {
  display: flex;
  align-items: center;
  height: 15px;
  gap: 4px;
  padding-right: 2px;
  margin-bottom: 2px;
  border: 1px solid #8c8c8c;
  border-left: 0;
}
.dockhead span {
  flex: 1;
}
.dockhead svg {
  width: 13px;
  height: 13px;
}
.dockbtn {
  height: 22px;
  border: 1px solid #a0a0a0;
  border-top-color: #fff;
  background: #f0f0f0;
  text-align: center;
}
.treetools {
  display: flex;
  align-items: center;
  gap: 7px;
  height: 26px;
  margin-top: 1px;
  padding-left: 6px;
  border-left: 1px solid #a0a0a0;
  border-top: 1px solid #a0a0a0;
  background: linear-gradient(#fdfdfd, #ececec);
}
.treetools svg {
  width: 16px;
  height: 14px;
}
.tree {
  flex: 1;
  margin: 0 0 1px 1px;
  padding: 1px 0 0 7px;
  border: 1px solid #82878f;
  background: #fff;
}
.node,
.root {
  display: flex;
  align-items: center;
  height: 16px;
}
.chev {
  width: 10px;
  height: 10px;
}
.stub {
  width: 5px;
  margin-left: 2px;
  border-top: 1px dotted #999;
}
.lbl {
  margin-left: 4px;
}
.kids {
  margin-left: 4px;
  padding-left: 20px;
  border-left: 1px dotted #999;
}
.kids li,
.memberlist li {
  display: flex;
  align-items: center;
  height: 16px;
  border-left: 1px dotted #999;
}
.branch {
  width: 10px;
  border-top: 1px dotted #999;
}
.leaf,
.member {
  display: flex;
  align-items: center;
  height: 16px;
}
.leaf {
  gap: 4px;
  padding-right: 4px;
}
.leaf.on {
  background: #d9d9d9;
}

.stage {
  flex: 1;
  display: flex;
  flex-direction: column;
  min-width: 0;
}
.edit {
  height: 29px;
  padding-left: 4px;
}
.floor {
  display: flex;
  align-items: center;
  gap: 6px;
  padding-left: 2px;
  border-left: 1px solid #b8b8b8;
  line-height: 15px;
}
.flat {
  width: 59px;
  height: 22px;
  padding-left: 2px;
  background: #fff;
}
.flat .arrow {
  right: 1px;
}
.panes {
  flex: 1;
  display: flex;
  gap: 3px;
  padding-right: 4px;
}
.members {
  display: flex;
  flex-direction: column;
  width: 184px;
  flex: none;
  padding: 5px 0 3px;
}
.search {
  display: flex;
  align-items: center;
  gap: 5px;
  height: 24px;
  padding-left: 1px;
  background: #fbfbfb;
}
.search input {
  flex: none;
  width: 157px;
  height: 24px;
  padding: 0 2px 3px;
  border: 1px solid #6d6d6d;
  background: #fff;
}
.search input::placeholder {
  color: #777;
}
.memberlist {
  flex: 1;
  margin-top: 1px;
  padding: 1px 0 0 7px;
  border: 1px solid #82878f;
  background: #fff;
}
.root span {
  margin-left: 4px;
}
.memberlist ul {
  margin-left: 23px;
}
.member {
  gap: 5px;
  padding-right: 5px;
}
.member.on {
  background: #316ac5;
}

.props {
  position: relative;
  flex: 1;
  display: flex;
  flex-direction: column;
  margin-bottom: 2px;
  border-left: 1px solid #d9d9d9;
  background: #fff;
}
.tabs {
  display: flex;
  height: 20px;
  border-bottom: 1px solid #d9d9d9;
}
.tab {
  width: 63px;
  height: 20px;
  border-right: 1px solid #d9d9d9;
  border-top: 1px solid #d9d9d9;
  background: #fff;
  text-align: center;
}
.sheet {
  flex: 1;
  display: flex;
  justify-content: space-between;
  margin: 4px 3px;
  border: 1px solid #a0a0a0;
}
table {
  align-self: flex-start;
  table-layout: fixed;
  width: 337px;
  border-collapse: collapse;
}
th,
td {
  height: 19px;
  padding: 0;
  border: 1px solid #c0c0c0;
  border-left: 0;
  font-weight: 400;
  text-align: left;
}
thead th {
  height: 23px;
  background: linear-gradient(#fff, #efefef);
  text-align: center;
}
thead .val {
  background: linear-gradient(#f9dca8, #efbd5c);
  color: #60005c;
}
.no {
  width: 21px;
  background: #f2f2f2;
  text-align: center;
}
.name {
  width: 191px;
}
.val {
  width: 125px;
}
td.name {
  padding-left: 20px;
}
td.name.group {
  padding-left: 3px;
}
td.val {
  padding-left: 2px;
}
.plus {
  width: 12px;
  height: 12px;
  margin-right: 5px;
  border: 1px solid #999;
  font: 12px/10px 'DejaVu Sans Mono', monospace;
  color: #000;
}
.link td.name {
  color: #00f;
}
tbody .dim {
  color: #000;
}
.dim td {
  color: #808080;
}
.cur th {
  background: #ffd284;
  color: #60005c;
}
.cur td.name {
  background: #0078d7;
  color: #fff;
}
.cur td.val {
  background: #d9ebf9;
}
.bar {
  display: inline-block;
  width: 12px;
  height: 12px;
  vertical-align: -2px;
}
.vscroll {
  display: flex;
  flex-direction: column;
  align-items: center;
  width: 14px;
  padding: 5px 0;
  gap: 3px;
  background: #f0f0f0;
}
.vscroll svg {
  width: 10px;
  height: 10px;
}
.vscroll svg:last-child {
  margin-top: auto;
}
.thumb {
  width: 14px;
  height: 63%;
  background: #cdcdcd;
}

.dialog {
  position: absolute;
  left: 327px;
  right: 18px;
  top: 20px;
  bottom: 3px;
  display: flex;
  flex-direction: column;
  padding: 1px 7px 7px;
  border: 1px solid #2b3038;
  background: linear-gradient(#99b4d1, #b9d1ea 30px);
  box-shadow: inset -1px -1px #49c3ea, inset 1px 1px #fff;
}
h2 {
  height: 29px;
  margin: 0;
  padding-top: 10px;
  font: inherit;
}
.dbody {
  flex: 1;
  display: flex;
  flex-direction: column;
  background: #f0f0f0;
}
.dtabs {
  display: flex;
  align-items: flex-end;
  height: 21px;
  padding-left: 2px;
}
.dtabs button {
  width: 46px;
  height: 19px;
  padding: 0 0 0 5px;
  border: 1px solid #d9d9d9;
  border-bottom: 0;
  text-align: left;
}
.dtabs .on {
  width: 52px;
  height: 21px;
  background: #fff;
}
.dpage {
  flex: 1;
  display: flex;
  flex-direction: column;
  margin-right: 1px;
  padding: 3px 3px 3px 5px;
  border: 1px solid #dcdcdc;
  border-left: 0;
  background: linear-gradient(90deg, #fff 4px, #f0f0f0 0);
}
.dbar {
  display: flex;
  align-items: center;
  gap: 10px;
  height: 27px;
  padding-left: 3px;
  background: linear-gradient(#fdfdfd, #f0f0f0);
}
.dbar .grip {
  width: 2px;
  height: 16px;
  margin-right: -3px;
  background: repeating-linear-gradient(#b4b4b4 0 2px, transparent 2px 4px);
}
.dbar .sep {
  margin: 0 -2px;
}
.info {
  height: 29px;
  width: 196px;
  color: #808080;
}
.info label {
  margin-right: -8px;
}
.bars {
  width: 133px;
  flex: none;
  height: 22px;
  border: 1px solid #6d6d6d;
}
.bars select {
  padding-left: 1px;
}
.canvas {
  flex: 1 1 0;
  width: 100%;
  min-height: 0;
  border: 2px solid #f00;
  background: #000;
}
.axis text {
  fill: #555;
  font: 10px 'Liberation Sans', sans-serif;
}
.dim-text {
  fill: #fff;
  font: 22px 'Liberation Serif', serif;
  text-anchor: middle;
}
.note text {
  fill: #fff;
  font: 300 21px 'Noto Sans CJK SC', sans-serif;
}
.spec text {
  fill: #0f0;
  font: 18px 'Liberation Mono', monospace;
}
.dstatus {
  display: flex;
  gap: 2px;
  height: 23px;
  padding-top: 2px;
}
.dstatus span {
  width: 148px;
  padding: 3px 7px;
  border: 1px solid #d6d6d6;
  background: linear-gradient(#fdfdfd, #f0f0f0);
}
.dstatus .fill {
  flex: 1;
  display: flex;
  align-items: flex-end;
  justify-content: flex-end;
  padding: 0;
}
.dstatus svg {
  width: 12px;
  height: 12px;
}

.status {
  display: flex;
  gap: 2px;
  height: 20px;
}
.status span {
  padding: 1px 1px 0;
  border: 1px solid #d6d6d6;
  background: linear-gradient(#fdfdfd, #f0f0f0);
}
.status b {
  font-weight: 400;
}
.s1 {
  width: 148px;
}
.s2 {
  width: 78px;
}
.s3 {
  width: 98px;
}
.s4 {
  width: 48px;
}
.s5 {
  flex: 1;
}
.s6 {
  width: 70px;
}

.taskbar {
  display: flex;
  align-items: center;
  height: 40px;
  background: #020b0f;
  color: #fff;
}
.start {
  display: grid;
  place-items: center;
  width: 48px;
  height: 40px;
  background: #000;
}
.start svg {
  width: 16px;
  height: 16px;
}
.cortana {
  display: flex;
  align-items: center;
  gap: 4px;
  width: 343px;
  height: 40px;
  padding: 0 11px 0 8px;
  background: #333;
}
.cortana svg {
  width: 24px;
  height: 24px;
}
.cortana .mic {
  width: 16px;
  height: 18px;
}
.cortana input {
  flex: 1;
  min-width: 0;
  font-size: 14px;
  line-height: 20px;
}
.cortana input::placeholder {
  color: #a0a0a0;
}
.pin,
.app {
  display: grid;
  place-items: center;
  width: 51px;
  height: 40px;
  border-bottom: 2px solid transparent;
}
.app {
  width: 49px;
}
.pin svg {
  width: 22px;
  height: 22px;
}
.app svg {
  width: 24px;
  height: 24px;
}
.app.on {
  border-image: linear-gradient(90deg, transparent 4px, #76b9ed 4px calc(100% - 4px), transparent 0) 2;
}
.app.active {
  border-image: none;
  border-bottom-color: #76b9ed;
  background: #343c40;
}
.links {
  margin-left: 11px;
}
.cpu {
  width: 50px;
  margin-left: 18px;
  text-align: center;
}
.tray {
  display: flex;
  align-items: center;
  gap: 9px;
  margin-left: 18px;
}
.tray svg {
  height: 16px;
}
.w12 {
  width: 12px;
}
.w14 {
  width: 14px;
}
.w16 {
  width: 16px;
}
.w18 {
  width: 18px;
}
.w24 {
  width: 24px;
}
.lang {
  width: 14px;
  font-size: 14px;
}
.clock {
  width: 64px;
  margin-left: auto;
  text-align: center;
}
.cpu,
.clock {
  line-height: 18px;
}
.notice {
  position: relative;
  width: 30px;
  margin: 0 12px 0 16px;
}
.notice svg {
  width: 18px;
  height: 18px;
}
.notice b {
  position: absolute;
  left: 6px;
  top: 6px;
  width: 18px;
  height: 18px;
  border: 1px solid #999;
  border-radius: 50%;
  background: #3a3a3a;
  font-size: 10px;
  line-height: 16px;
}
</style>
